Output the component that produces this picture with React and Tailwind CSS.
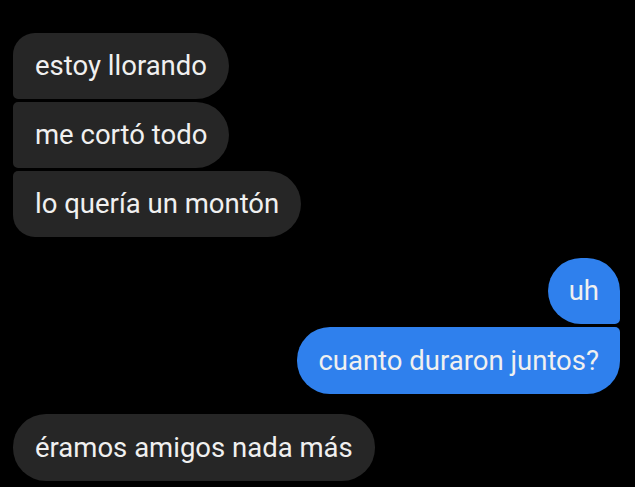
export default function App() {
  const font = { fontFamily: "Roboto, 'Noto Sans', sans-serif" };
  return (
    <div className="w-[635px] h-[487px] bg-black overflow-hidden pl-[13px] pr-[15px] pt-[33px]" style={font}>
      <div className="flex flex-col items-start gap-[3px]">
        <div className="h-[66px] flex items-center px-[22px] bg-[#262626] text-[#f0f0f0] text-[27.5px] rounded-r-[33px] rounded-tl-[22px] rounded-bl-[5px]">
          estoy llorando
        </div>
        <div className="h-[66px] flex items-center px-[22px] bg-[#262626] text-[#f0f0f0] text-[27.5px] rounded-r-[33px] rounded-l-[5px]">
          me cortó todo
        </div>
        <div className="h-[66px] flex items-center px-[22px] bg-[#262626] text-[#f0f0f0] text-[27.5px] rounded-r-[33px] rounded-tl-[5px] rounded-bl-[22px]">
          lo quería un montón
        </div>
      </div>
      <div className="flex flex-col items-end gap-[3px] mt-[21px]">
        <div className="h-[66px] flex items-center px-[21px] bg-[#2f80ed] text-[#f0f0f0] text-[27.5px] rounded-l-[33px] rounded-tr-[33px] rounded-br-[5px]">
          uh
        </div>
        <div className="h-[67px] flex items-center px-[21px] bg-[#2f80ed] text-[#f0f0f0] text-[27.5px] rounded-l-[33px] rounded-tr-[5px] rounded-br-[33px]">
          cuanto duraron juntos?
        </div>
      </div>
      <div className="flex flex-col items-start mt-[20px]">
        <div className="h-[67px] flex items-center px-[22px] bg-[#262626] text-[#f0f0f0] text-[27.5px] rounded-[33px]">
          éramos amigos nada más
        </div>
      </div>
    </div>
  );
}
